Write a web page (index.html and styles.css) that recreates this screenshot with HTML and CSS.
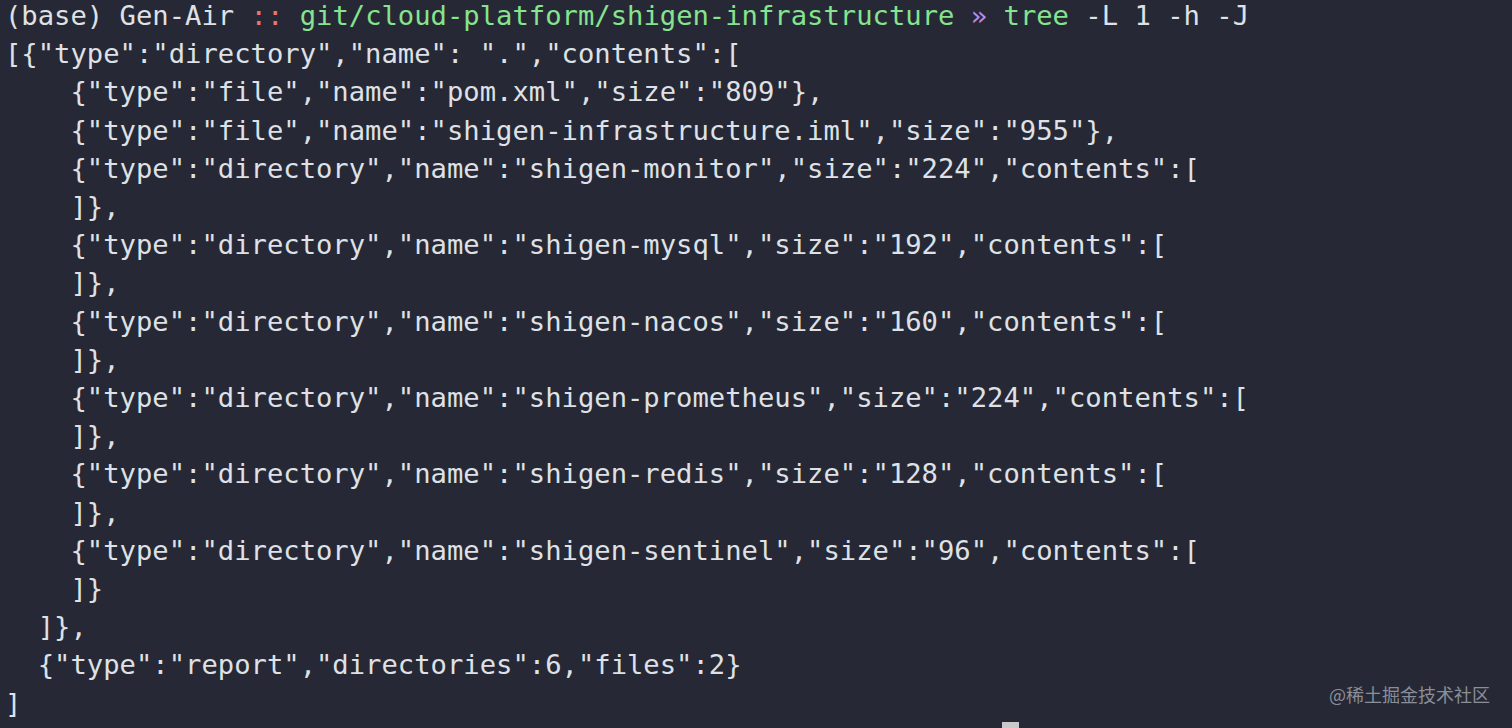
FILE: index.html
```html
<!DOCTYPE html>
<html>
<head>
<meta charset="utf-8">
<link rel="stylesheet" href="styles.css">
</head>
<body>
<main class="term">
<pre class="out"><span class="line">(base) Gen-Air <span class="sep">::</span> <span class="path">git/cloud-platform/shigen-infrastructure</span> <span class="arrow">»</span> <span class="cmd">tree</span> -L 1 -h -J</span>
<span class="line">[{"type":"directory","name": ".","contents":[</span>
<span class="line">    {"type":"file","name":"pom.xml","size":"809"},</span>
<span class="line">    {"type":"file","name":"shigen-infrastructure.iml","size":"955"},</span>
<span class="line">    {"type":"directory","name":"shigen-monitor","size":"224","contents":[</span>
<span class="line">    ]},</span>
<span class="line">    {"type":"directory","name":"shigen-mysql","size":"192","contents":[</span>
<span class="line">    ]},</span>
<span class="line">    {"type":"directory","name":"shigen-nacos","size":"160","contents":[</span>
<span class="line">    ]},</span>
<span class="line">    {"type":"directory","name":"shigen-prometheus","size":"224","contents":[</span>
<span class="line">    ]},</span>
<span class="line">    {"type":"directory","name":"shigen-redis","size":"128","contents":[</span>
<span class="line">    ]},</span>
<span class="line">    {"type":"directory","name":"shigen-sentinel","size":"96","contents":[</span>
<span class="line">    ]}</span>
<span class="line">  ]},</span>
<span class="line">  {"type":"report","directories":6,"files":2}</span>
<span class="line">]</span></pre>
<div class="cursor"></div>
<div class="mark">@稀土掘金技术社区</div>
</main>
</body>
</html>
```
FILE: styles.css
```css
html, body {
  margin: 0;
  padding: 0;
  background: #262935;
  overflow: hidden;
}
.term {
  position: relative;
  width: 1512px;
  height: 728px;
  overflow: hidden;
  background: #262935;
}
.out {
  margin: 0;
  padding: 0 0 0 5px;
  margin-top: -3px;
  font-family: "DejaVu Sans Mono", "Liberation Mono", monospace;
  font-size: 27.2px;
  line-height: 38.2px;
  color: #dfe1e6;
  white-space: pre;
}
.line { display: inline; }
.sep { color: #e8756f; }
.path { color: #86e38f; }
.arrow { color: #b88cf0; }
.cmd { color: #86e38f; }
.cursor {
  position: absolute;
  left: 1002px;
  top: 722px;
  width: 17px;
  height: 10px;
  background: #c9c9c9;
}
.mark {
  position: absolute;
  left: 1329px;
  top: 682px;
  font-family: "Noto Sans CJK SC", "Noto Sans", sans-serif;
  font-size: 18px;
  line-height: 24px;
  color: #8b8e97;
}
```
